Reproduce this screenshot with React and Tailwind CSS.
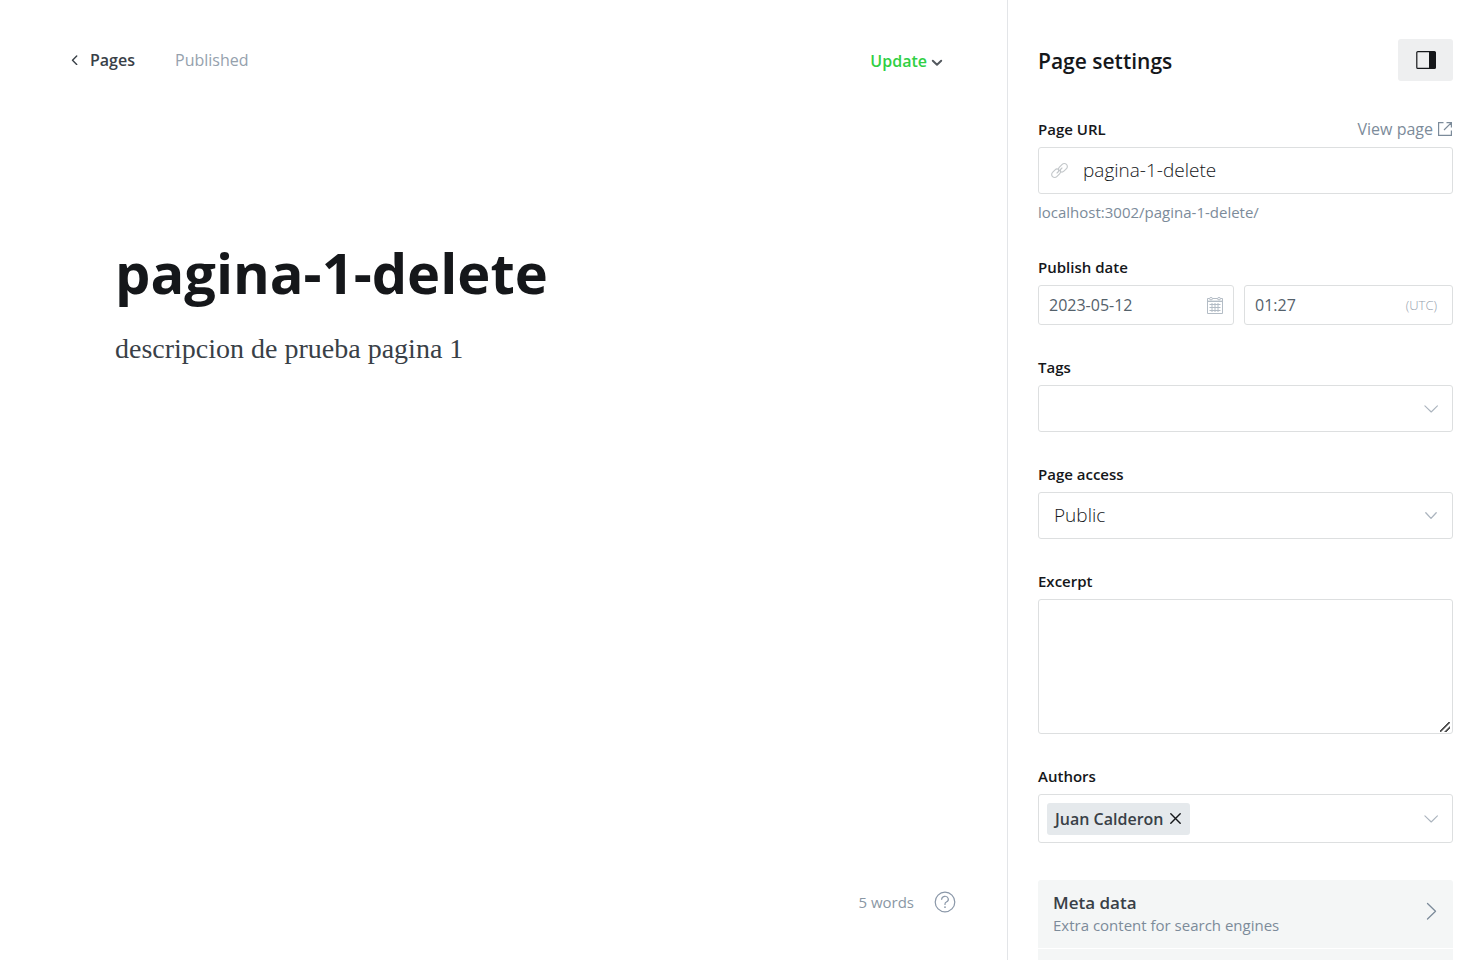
import React from "react";

const label = "block text-[15px] leading-5 font-semibold text-[#15171a]";
const box = "w-full rounded-[3px] border border-[#dddfe0] bg-white outline-none";
const resizer =
  "[&::-webkit-resizer]:bg-[linear-gradient(135deg,transparent_43%,#505050_45%_54%,transparent_56%_69%,#505050_71%_80%,transparent_82%)] [&::-webkit-resizer]:bg-[length:10px_10px] [&::-webkit-resizer]:bg-[position:3px_4px] [&::-webkit-resizer]:bg-no-repeat";

function ChevronDown({ className }) {
  return (
    <svg className={className} width="14" height="8" viewBox="0 0 14 8" fill="none" stroke="#abb4be" strokeWidth="1.1" aria-hidden="true">
      <path d="M.9 .9 7.200 7 13.400 .9" strokeLinecap="round" strokeLinejoin="round" />
    </svg>
  );
}

function SelectChevron({ className }) {
  return (
    <svg className={className} width="12" height="8" viewBox="0 0 12 8" fill="none" stroke="#abb4be" strokeWidth="1.3" aria-hidden="true">
      <path d="M.8 .8 6 6.400 11.200 .8" strokeLinecap="round" strokeLinejoin="round" />
    </svg>
  );
}

function LinkIcon() {
  return (
    <svg className="shrink-0" width="17" height="17" viewBox="0 0 24 24" fill="none" stroke="#c3c7ca" strokeWidth="1.600" strokeLinecap="round" strokeLinejoin="round" aria-hidden="true">
      <path d="M8.500 15.500 15.500 8.500" />
      <path d="M10.300 10.200a4 4 0 0 0-4.500.8L2.200 14.700a4.200 4.200 0 0 0 0 6 4.200 4.200 0 0 0 6 0l4.200-4.200a4 4 0 0 0 .8-4.700" />
      <path d="M13.700 13.800a4 4 0 0 0 4.500-.8l3.600-3.700a4.200 4.200 0 0 0 0-6 4.200 4.200 0 0 0-6 0l-4.200 4.200a4 4 0 0 0-.8 4.700" />
    </svg>
  );
}

function CalendarIcon() {
  return (
    <svg className="shrink-0" width="16" height="17" viewBox="0 0 16 17" fill="none" stroke="#b3bcc5" strokeWidth="1" aria-hidden="true">
      <path d="M2.500 1.500h-2v15h15v-15h-2M5.500 1.500h5M.5 4.500h15" />
      <path d="M1 3.500h14" stroke="#e3e7ea" />
      <ellipse cx="4" cy="1.700" rx="1.500" ry="1.200" />
      <ellipse cx="12" cy="1.700" rx="1.500" ry="1.200" />
      <path d="M2.500 7.500h11M2.500 10.500h11M2.500 13.500h11M5 6v9M8 6v9M11 6v9" />
    </svg>
  );
}

export default function App() {
  return (
    <div className="flex h-screen overflow-hidden bg-white font-['Open_Sans','Noto_Sans',sans-serif] text-[#394047]">
      <main className="flex min-w-0 flex-1 flex-col">
        <header className="flex h-[81px] items-end justify-between pl-[71px] pr-16">
          <div className="flex h-[42px] items-center gap-10 text-base">
            <a href="#pages" className="flex items-center gap-3 font-semibold text-[#394047]">
              <svg width="7" height="10" viewBox="0 0 7 10" fill="none" stroke="#394047" strokeWidth="1.400" strokeLinecap="round" strokeLinejoin="round" aria-hidden="true">
                <path d="M5.700 1 1.500 5.200l4.200 4.200" />
              </svg>
              Pages
            </a>
            <span className="text-[#95a1ad]">Published</span>
          </div>
          <button type="button" className="flex h-10 items-center gap-1 text-base font-semibold text-[#30cf43]">
            Update
            <svg className="mt-1" width="12" height="8" viewBox="0 0 12 8" fill="none" stroke="#54595f" strokeWidth="2" strokeLinecap="round" strokeLinejoin="round" aria-hidden="true">
              <path d="M1.800 1.800 6 5.800l4.200-4" />
            </svg>
          </button>
        </header>

        <div className="flex-1 px-[115px] pt-[156px]">
          <input
            aria-label="Page title"
            defaultValue="pagina-1-delete"
            className="block h-[70px] w-full text-[56px] leading-[70px] font-bold text-[#15171a] outline-none"
          />
          <div
            contentEditable
            suppressContentEditableWarning
            className="mt-[22px] font-['Liberation_Serif',serif] text-[28px] leading-10 text-[#394047] outline-none"
          >
            <p>descripcion de prueba pagina 1</p>
          </div>
        </div>

        <footer className="flex items-center justify-end gap-5 pr-[51px] pb-[47px]">
          <span className="text-[15px] text-[#8a97a4]">5 words</span>
          <button type="button" aria-label="Help">
            <svg width="22" height="22" viewBox="0 0 22 22" fill="none" stroke="#8a97a8" strokeWidth="1.200" strokeLinecap="round" aria-hidden="true">
              <circle cx="11" cy="11" r="9.800" />
              <path d="M7.700 8.300a3.300 3 0 1 1 4.700 2.700c-.9.450-1.400 1-1.400 1.900v.5" />
              <circle cx="11" cy="16.200" r=".3" fill="#8a97a8" />
            </svg>
          </button>
        </footer>
      </main>

      <aside className="w-[476px] shrink-0 overflow-y-auto border-l border-[#e3e5e8] px-[30px] pt-[39px] [scrollbar-width:none]">
        <div className="flex h-[42px] items-center justify-between">
          <h2 className="pt-0.5 text-[21px] leading-7 font-semibold text-[#15171a]">Page settings</h2>
          <button type="button" aria-label="Toggle settings" className="flex h-[42px] w-[55px] items-center justify-center rounded-[3px] bg-[#eeeff0]">
            <svg width="20" height="18" viewBox="0 0 20 18" aria-hidden="true">
              <rect x=".8" y=".6" width="18.600" height="16.800" rx="1" fill="none" stroke="#15171a" strokeWidth="1.200" />
              <path d="M13 1h6.500v16H13z" fill="#15171a" />
            </svg>
          </button>
        </div>

        <div className="mt-[38px]">
          <div className="flex h-5 items-center justify-between">
            <label htmlFor="url" className={label}>Page URL</label>
            <a href="#view" className="flex items-center gap-1 text-base leading-5 text-[#7c8b9a]">
              View page
              <svg width="16" height="16" viewBox="0 0 16 16" fill="none" stroke="#7c8b9a" strokeWidth="1.200" aria-hidden="true">
                <path d="M6.500 1.600H1.600v12.800h12.800V9.500M9.500 1.600h4.900v4.900M14.400 1.600 7 9" />
              </svg>
            </a>
          </div>
          <div className={`mt-2 flex h-[47px] items-center gap-[15px] px-3 ${box}`}>
            <LinkIcon />
            <input id="url" defaultValue="pagina-1-delete" className="min-w-0 flex-1 text-[19px] font-light text-[#15171a] outline-none" />
          </div>
          <p className="mt-2 text-[15px] leading-5 text-[#7c8b9a]">localhost:3002/pagina-1-delete/</p>
        </div>

        <div className="mt-[35px]">
          <label htmlFor="date" className={label}>Publish date</label>
          <div className="mt-2 flex gap-[10px]">
            <div className="flex h-10 w-[196px] shrink-0 items-center rounded-[3px] border border-[#dddfe0] px-[10px]">
              <input id="date" defaultValue="2023-05-12" className="min-w-0 flex-1 text-base text-[#54616b] outline-none" />
              <CalendarIcon />
            </div>
            <div className="flex h-10 min-w-0 flex-1 items-center rounded-[3px] border border-[#dddfe0] pr-[15px] pl-[10px]">
              <input aria-label="Publish time" defaultValue="01:27" className="min-w-0 flex-1 text-base text-[#54616b] outline-none" />
              <span className="text-[13px] leading-5 font-light text-[#95a1ad]">(UTC)</span>
            </div>
          </div>
        </div>

        <div className="mt-8">
          <label htmlFor="tags" className={label}>Tags</label>
          <div className={`mt-2 flex h-[47px] items-center px-[14px] ${box}`}>
            <input id="tags" role="combobox" aria-expanded="false" className="min-w-0 flex-1 outline-none" />
            <ChevronDown />
          </div>
        </div>

        <div className="mt-8">
          <label htmlFor="access" className={label}>Page access</label>
          <div className={`mt-2 grid h-[47px] items-center ${box}`}>
            <select id="access" className="col-start-1 row-start-1 h-full w-full appearance-none pl-[15px] text-[19px] font-light text-[#15171a] outline-none">
              <option>Public</option>
            </select>
            <SelectChevron className="pointer-events-none col-start-1 row-start-1 mr-[15px] justify-self-end" />
          </div>
        </div>

        <div className="mt-8">
          <label htmlFor="excerpt" className={label}>Excerpt</label>
          <textarea id="excerpt" className={`mt-2 block h-[135px] resize-y p-3 ${box} ${resizer}`} />
        </div>

        <div className="mt-8">
          <label htmlFor="authors" className={label}>Authors</label>
          <div className={`mt-2 flex h-[49px] items-center pr-[14px] pl-2 ${box}`}>
            <span className="flex h-8 items-center gap-[6px] rounded-[3px] bg-[#e5e9ec] px-2 text-base font-semibold text-[#394047]">
              Juan Calderon
              <button type="button" aria-label="Remove Juan Calderon" className="p-px">
                <svg width="11" height="11" viewBox="0 0 11 11" stroke="#15171a" strokeWidth="1.400" strokeLinecap="round" aria-hidden="true">
                  <path d="m.8 .8 9.400 9.400M10.200 .8.8 10.200" />
                </svg>
              </button>
            </span>
            <input id="authors" role="combobox" aria-expanded="false" className="min-w-0 flex-1 outline-none" />
            <ChevronDown />
          </div>
        </div>

        <div className="mt-[37px] flex flex-col gap-px overflow-hidden rounded-[3px]">
          <button type="button" className="flex items-start justify-between bg-[#f4f6f6] px-[15px] py-3 text-left">
            <span>
              <span className="block text-[17px] leading-[22px] font-semibold text-[#394047]">Meta data</span>
              <span className="block text-[15px] leading-[22px] text-[#7c8b9a]">Extra content for search engines</span>
            </span>
            <svg className="mt-[10px] mr-px" width="11" height="18" viewBox="0 0 11 18" fill="none" stroke="#7c8b9a" strokeWidth="1.300" strokeLinecap="round" strokeLinejoin="round" aria-hidden="true">
              <path d="M1.500 1.500 9.500 9.250l-8 7.750" />
            </svg>
          </button>
          <div className="h-[68px] bg-[#f4f6f6]" />
        </div>
      </aside>
    </div>
  );
}
